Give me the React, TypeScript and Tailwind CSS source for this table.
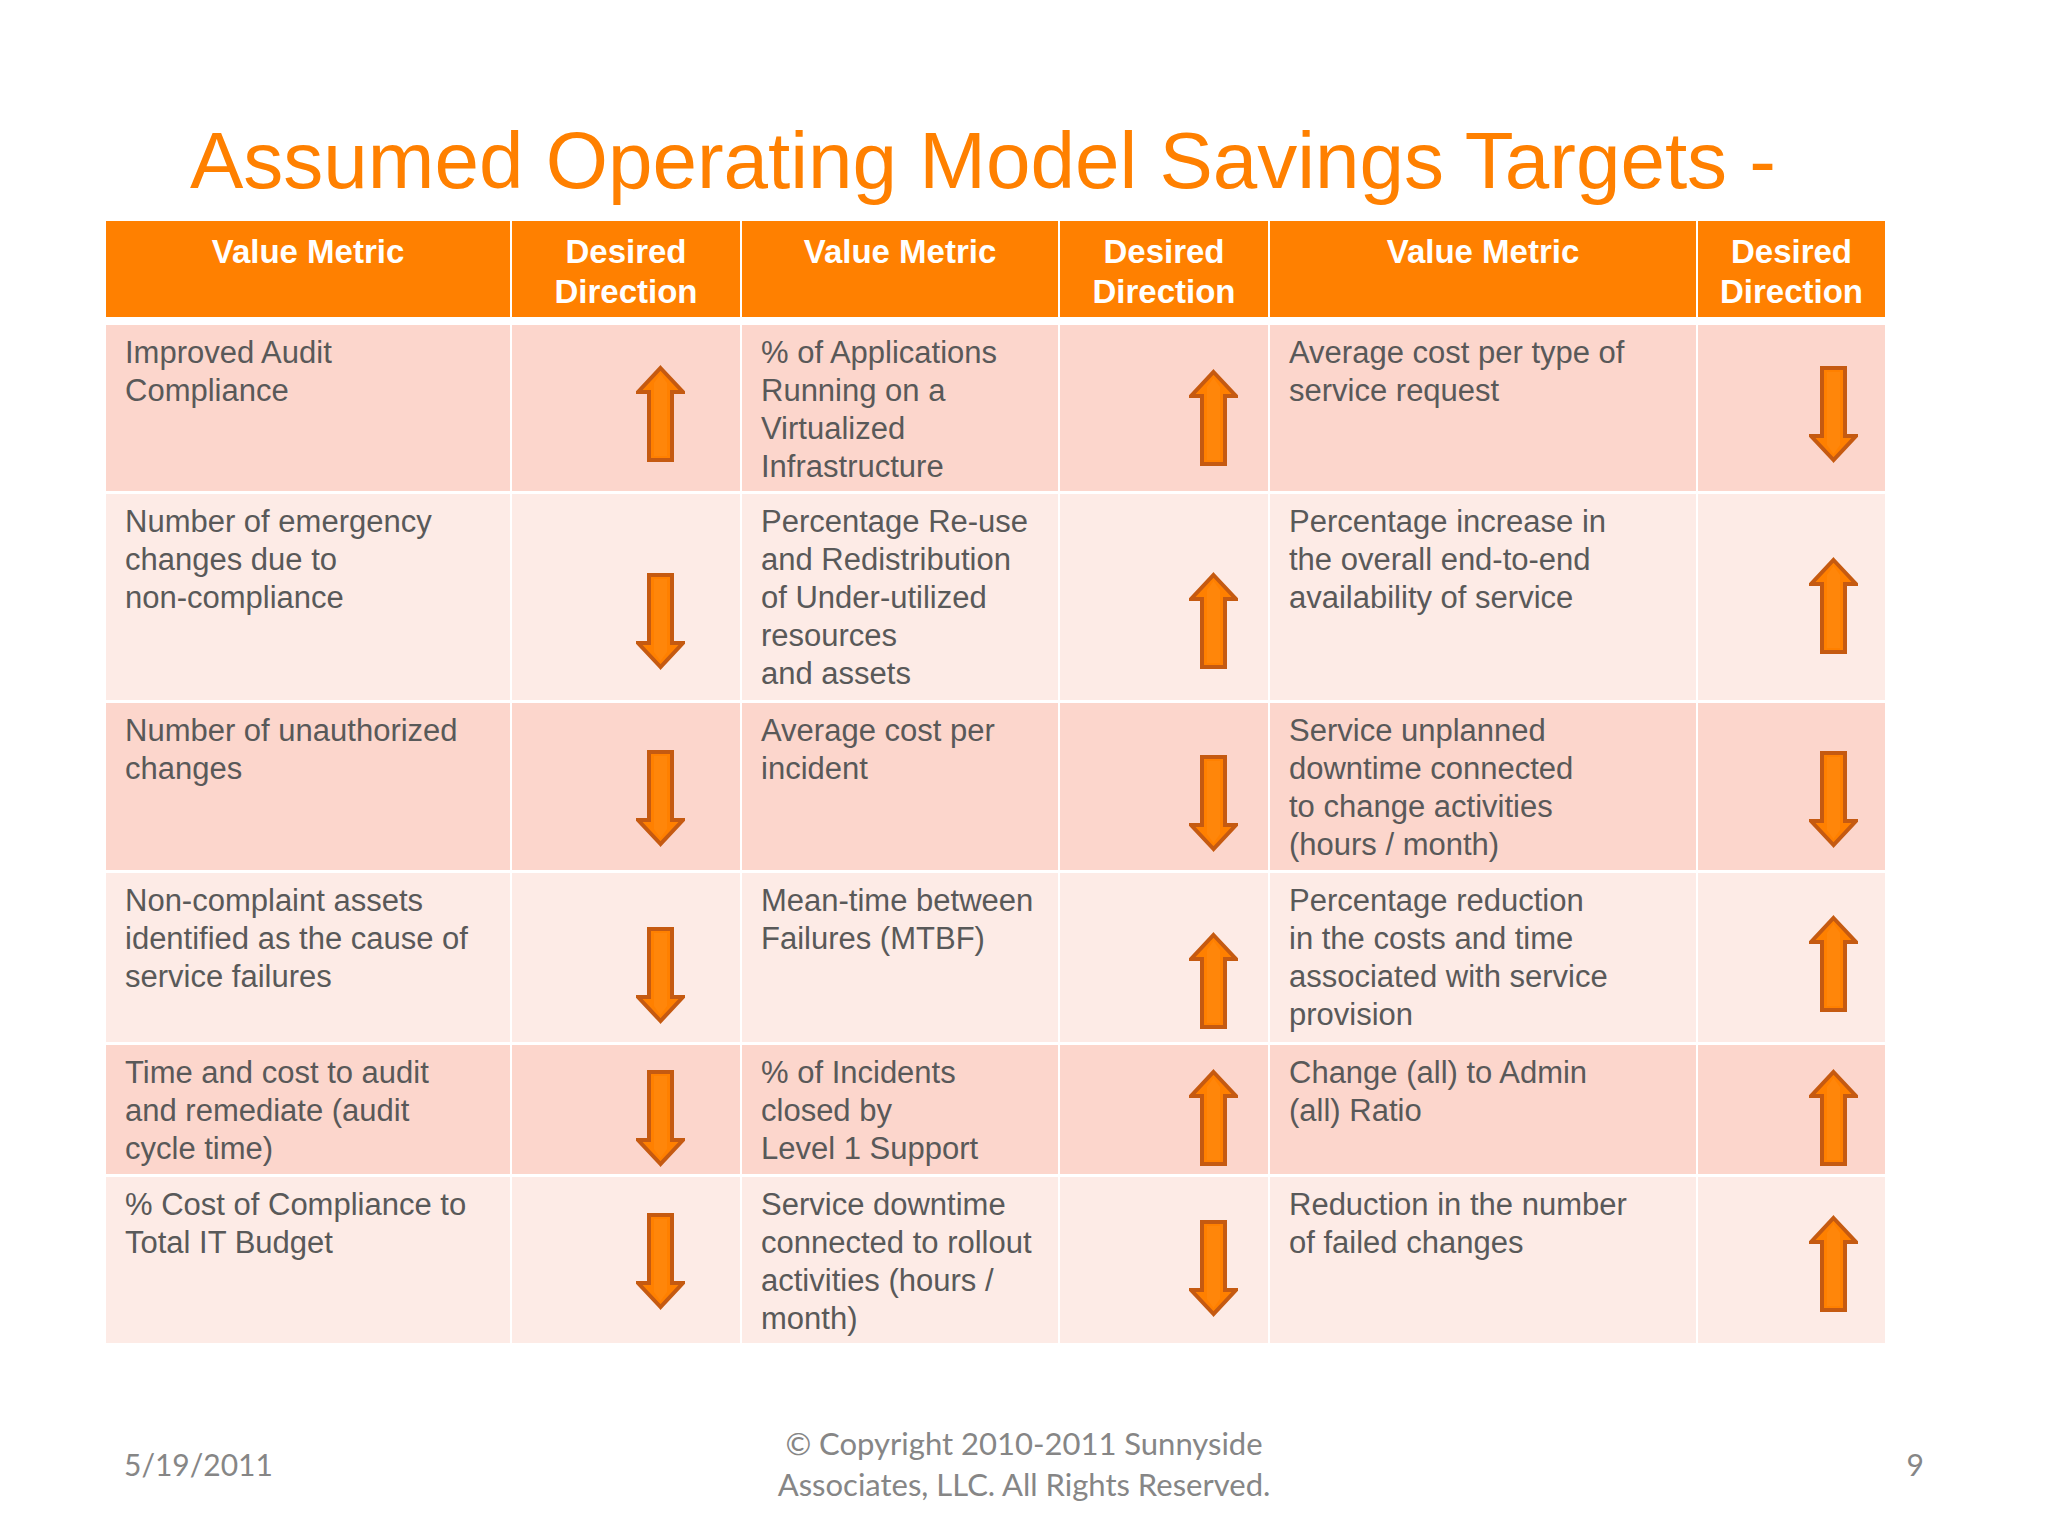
import React from "react";

type Dir = "up" | "down";

const Arrow = ({ dir }: { dir: Dir }) => (
  <svg width="49" height="97" viewBox="0 0 49 97" className={dir === "down" ? "rotate-180" : ""}>
    <polygon
      points="24.5,3 47,27 36,27 36,95 13,95 13,27 2,27"
      fill="#FF8000"
      stroke="#C55A11"
      strokeWidth="4"
      strokeLinejoin="miter"
    />
    <polygon points="24.5,9 31,18 31,91 18,91 18,18" fill="#FF8A10" opacity="0.6" />
  </svg>
);

type Row = {
  h: string;
  bg: string;
  c1: string[];
  a1: Dir;
  p1: string;
  c2: string[];
  a2: Dir;
  p2: string;
  c3: string[];
  a3: Dir;
  p3: string;
};

const ODD = "bg-[#FCD6CC]";
const EVEN = "bg-[#FDEBE6]";

const rows: Row[] = [
  {
    h: "h-[166px]",
    bg: ODD,
    c1: ["Improved Audit", "Compliance"],
    a1: "up",
    p1: "pt-[40px]",
    c2: ["% of Applications", "Running on a", "Virtualized", "Infrastructure"],
    a2: "up",
    p2: "pt-[44px]",
    c3: ["Average cost per type of", "service request"],
    a3: "down",
    p3: "pt-[41px]",
  },
  {
    h: "h-[206px]",
    bg: EVEN,
    c1: ["Number of emergency", "changes due to", "non-compliance"],
    a1: "down",
    p1: "pt-[79px]",
    c2: ["Percentage Re-use", "and Redistribution", "of Under-utilized", "resources", "and assets"],
    a2: "up",
    p2: "pt-[78px]",
    c3: ["Percentage increase in", "the overall end-to-end", "availability of service"],
    a3: "up",
    p3: "pt-[63px]",
  },
  {
    h: "h-[167px]",
    bg: ODD,
    c1: ["Number of unauthorized", "changes"],
    a1: "down",
    p1: "pt-[47px]",
    c2: ["Average cost per", "incident"],
    a2: "down",
    p2: "pt-[52px]",
    c3: ["Service unplanned", "downtime connected", "to change activities", "(hours / month)"],
    a3: "down",
    p3: "pt-[48px]",
  },
  {
    h: "h-[169px]",
    bg: EVEN,
    c1: ["Non-complaint assets", "identified as the cause of", "service failures"],
    a1: "down",
    p1: "pt-[54px]",
    c2: ["Mean-time between", "Failures (MTBF)"],
    a2: "up",
    p2: "pt-[59px]",
    c3: ["Percentage reduction", "in the costs and time", "associated with service", "provision"],
    a3: "up",
    p3: "pt-[42px]",
  },
  {
    h: "h-[129px]",
    bg: ODD,
    c1: ["Time and cost to audit", "and remediate (audit", "cycle time)"],
    a1: "down",
    p1: "pt-[25px]",
    c2: ["% of Incidents", "closed by", "Level 1 Support"],
    a2: "up",
    p2: "pt-[24px]",
    c3: ["Change (all) to Admin", "(all) Ratio"],
    a3: "up",
    p3: "pt-[24px]",
  },
  {
    h: "h-[166px]",
    bg: EVEN,
    c1: ["% Cost of Compliance to", "Total IT Budget"],
    a1: "down",
    p1: "pt-[36px]",
    c2: ["Service downtime", "connected to rollout", "activities (hours /", "month)"],
    a2: "down",
    p2: "pt-[43px]",
    c3: ["Reduction in the number", "of failed changes"],
    a3: "up",
    p3: "pt-[38px]",
  },
];

const GRID = "grid grid-cols-[404px_228px_316px_208px_426px_187px] gap-x-[2px]";

const TextCell = ({ lines, bg }: { lines: string[]; bg: string }) => (
  <div className={`${bg} pl-[19px] pt-[9px] text-[31px] leading-[38px] text-[#595959]`}>
    {lines.map((l, i) => (
      <div key={i} className="whitespace-nowrap">
        {l}
      </div>
    ))}
  </div>
);

const ArrowCell = ({ dir, bg, pt, pl }: { dir: Dir; bg: string; pt: string; pl: string }) => (
  <div className={`${bg} ${pt} ${pl}`}>
    <Arrow dir={dir} />
  </div>
);

const Head = ({ lines }: { lines: string[] }) => (
  <div className="bg-[#FF8000] pt-[11px] text-center text-[33px] font-bold leading-[40px] text-white">
    {lines.map((l, i) => (
      <div key={i}>{l}</div>
    ))}
  </div>
);

export default function App() {
  return (
    <div
      className="w-[2048px] h-[1536px] bg-white overflow-hidden"
      style={{ fontFamily: '"Liberation Sans", Arial, sans-serif' }}
    >
      <div className="pl-[190px] pt-[121px] text-[80px] leading-[80px] text-[#FF8000] whitespace-nowrap">
        Assumed Operating Model Savings Targets -
      </div>

      <div className="ml-[106px] mt-[20px] w-[1779px]">
        <div className={`${GRID} h-[96px]`}>
          <Head lines={["Value Metric"]} />
          <Head lines={["Desired", "Direction"]} />
          <Head lines={["Value Metric"]} />
          <Head lines={["Desired", "Direction"]} />
          <Head lines={["Value Metric"]} />
          <Head lines={["Desired", "Direction"]} />
        </div>
        <div className="mt-[8px] flex flex-col gap-y-[3px]">
          {rows.map((r, i) => (
            <div key={i} className={`${GRID} ${r.h}`}>
              <TextCell lines={r.c1} bg={r.bg} />
              <ArrowCell dir={r.a1} bg={r.bg} pt={r.p1} pl="pl-[124px]" />
              <TextCell lines={r.c2} bg={r.bg} />
              <ArrowCell dir={r.a2} bg={r.bg} pt={r.p2} pl="pl-[129px]" />
              <TextCell lines={r.c3} bg={r.bg} />
              <ArrowCell dir={r.a3} bg={r.bg} pt={r.p3} pl="pl-[111px]" />
            </div>
          ))}
        </div>
      </div>

      <div
        className="mt-[80px] grid grid-cols-3 items-center px-[124px] text-[#868686] text-[30px] leading-[41px]"
        style={{ fontFamily: 'Lato, "Open Sans", sans-serif' }}
      >
        <div className="text-left">5/19/2011</div>
        <div className="text-center whitespace-nowrap text-[31px]">
          <div>© Copyright 2010-2011 Sunnyside</div>
          <div>Associates, LLC. All Rights Reserved.</div>
        </div>
        <div className="text-right">9</div>
      </div>
    </div>
  );
}
